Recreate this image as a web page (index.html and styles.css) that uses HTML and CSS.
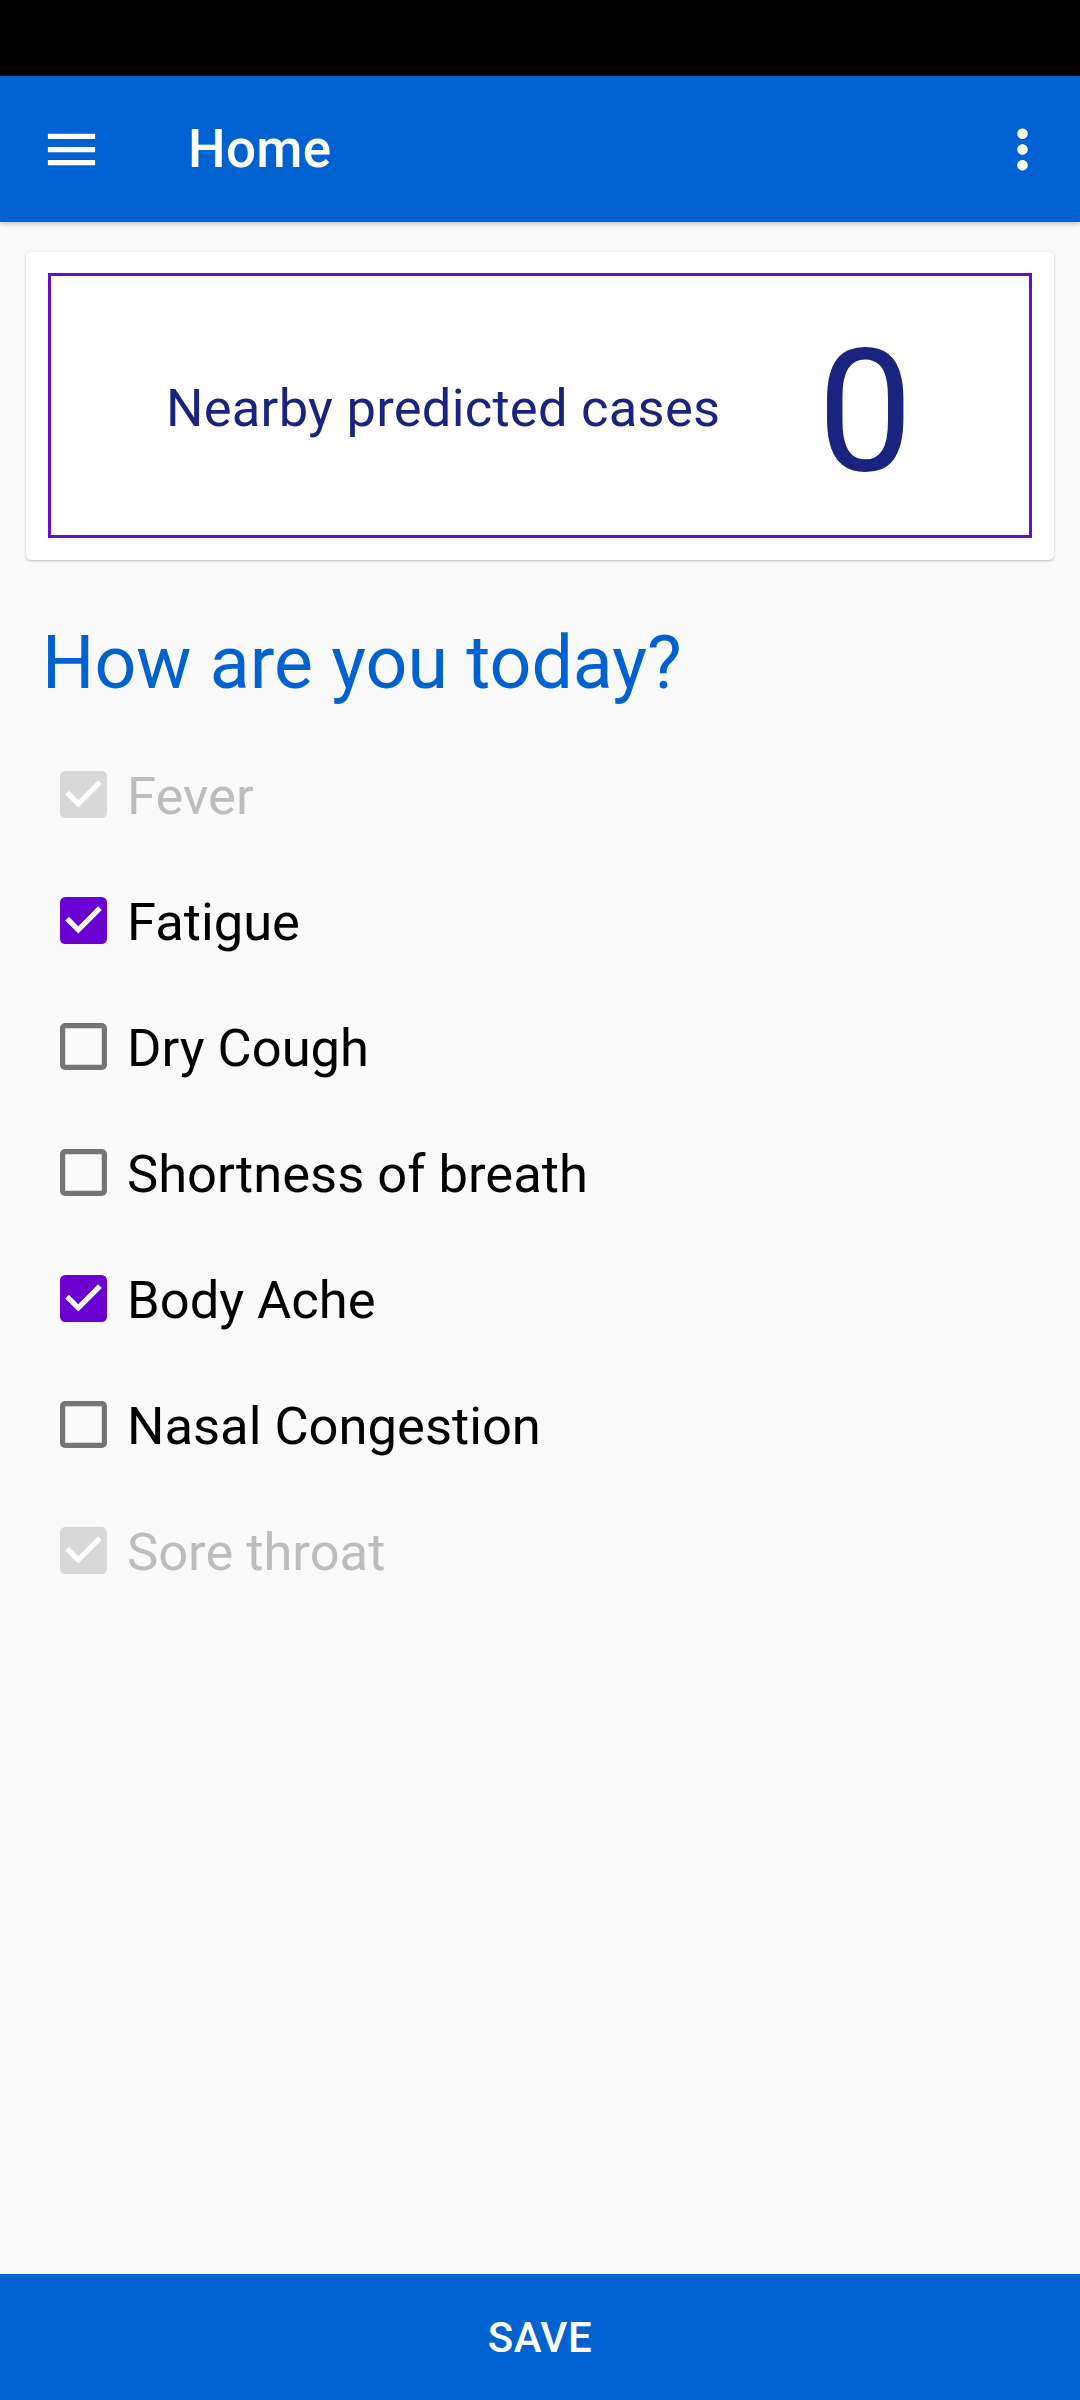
FILE: index.html
```html
<!DOCTYPE html>
<html lang="en">
<head>
<meta charset="utf-8">
<title>Home</title>
<link rel="stylesheet" href="styles.css">
</head>
<body>
<div class="screen">
  <div class="status-bar"></div>
  <header class="app-bar">
    <svg class="icon icon-menu" viewBox="0 0 24 24"><path fill="#fff" d="M3 18h18v-2H3v2zm0-5h18v-2H3v2zm0-7v2h18V6H3z"/></svg>
    <h1 class="app-title">Home</h1>
    <div class="spacer"></div>
    <svg class="icon icon-more" viewBox="0 0 24 24"><path fill="#fff" d="M12 8c1.1 0 2-.9 2-2s-.9-2-2-2-2 .9-2 2 .9 2 2 2zm0 2c-1.1 0-2 .9-2 2s.9 2 2 2 2-.9 2-2-.9-2-2-2zm0 6c-1.1 0-2 .9-2 2s.9 2 2 2 2-.9 2-2-.9-2-2-2z"/></svg>
  </header>
  <main class="content">
    <section class="card">
      <div class="cases-box">
        <span class="cases-label">Nearby predicted cases</span>
        <span class="cases-count">0</span>
      </div>
    </section>
    <h2 class="question">How are you today?</h2>
    <ul class="symptoms">
      <li class="symptom disabled">
        <svg class="cb" viewBox="3 3 18 18"><rect x="3" y="3" width="18" height="18" rx="2" class="cb-fill"/><path fill="#fff" d="M10 17l-5-5 1.41-1.41L10 14.170l7.59-7.59L19 8l-9 9z"/></svg>
        <span class="label">Fever</span>
      </li>
      <li class="symptom checked">
        <svg class="cb" viewBox="3 3 18 18"><rect x="3" y="3" width="18" height="18" rx="2" class="cb-fill"/><path fill="#fff" d="M10 17l-5-5 1.41-1.41L10 14.17l7.59-7.59L19 8l-9 9z"/></svg>
        <span class="label">Fatigue</span>
      </li>
      <li class="symptom">
        <svg class="cb" viewBox="3 3 18 18"><path class="cb-outline" d="M19 5v14H5V5h14m0-2H5c-1.1 0-2 .9-2 2v14c0 1.1.9 2 2 2h14c1.1 0 2-.9 2-2V5c0-1.1-.9-2-2-2z"/></svg>
        <span class="label">Dry Cough</span>
      </li>
      <li class="symptom">
        <svg class="cb" viewBox="3 3 18 18"><path class="cb-outline" d="M19 5v14H5V5h14m0-2H5c-1.1 0-2 .9-2 2v14c0 1.1.9 2 2 2h14c1.1 0 2-.9 2-2V5c0-1.1-.9-2-2-2z"/></svg>
        <span class="label">Shortness of breath</span>
      </li>
      <li class="symptom checked">
        <svg class="cb" viewBox="3 3 18 18"><rect x="3" y="3" width="18" height="18" rx="2" class="cb-fill"/><path fill="#fff" d="M10 17l-5-5 1.41-1.41L10 14.17l7.59-7.59L19 8l-9 9z"/></svg>
        <span class="label">Body Ache</span>
      </li>
      <li class="symptom">
        <svg class="cb" viewBox="3 3 18 18"><path class="cb-outline" d="M19 5v14H5V5h14m0-2H5c-1.1 0-2 .9-2 2v14c0 1.1.9 2 2 2h14c1.1 0 2-.9 2-2V5c0-1.1-.9-2-2-2z"/></svg>
        <span class="label">Nasal Congestion</span>
      </li>
      <li class="symptom disabled">
        <svg class="cb" viewBox="3 3 18 18"><rect x="3" y="3" width="18" height="18" rx="2" class="cb-fill"/><path fill="#fff" d="M10 17l-5-5 1.41-1.41L10 14.17l7.59-7.59L19 8l-9 9z"/></svg>
        <span class="label">Sore throat</span>
      </li>
    </ul>
  </main>
  <button class="save-bar">SAVE</button>
</div>
</body>
</html>
```

FILE: styles.css
```css
html, body {
  margin: 0;
  padding: 0;
}
body {
  width: 1080px;
  height: 2400px;
  background: #fafafa;
  font-family: Roboto, "Noto Sans", "Liberation Sans", sans-serif;
  overflow: hidden;
}
.screen {
  width: 1080px;
  height: 2400px;
  display: flex;
  flex-direction: column;
}
.status-bar {
  height: 76px;
  background: #000;
  flex: none;
}
.app-bar {
  height: 146px;
  flex: none;
  background: #0062d1;
  display: flex;
  align-items: center;
  padding: 0 26px 0 40px;
  box-shadow: 0 2px 5px rgba(0, 0, 0, 0.22);
  position: relative;
  z-index: 2;
}
.icon {
  width: 63px;
  height: 63px;
  flex: none;
  display: block;
}
.app-title {
  margin: 0 0 0 85px;
  color: #fff;
  font-size: 53px;
  font-weight: 500;
  line-height: 62px;
  letter-spacing: 0.3px;
}
.spacer {
  flex: 1;
}
.content {
  flex: 1;
  display: flex;
  flex-direction: column;
}
.card {
  margin: 30px 26px 0 26px;
  background: #fff;
  border-radius: 5px;
  box-shadow: 0 1px 3px rgba(0, 0, 0, 0.2), 0 1px 1px rgba(0, 0, 0, 0.06);
  padding: 21px 22px 22px 22px;
}
.cases-box {
  height: 265px;
  box-sizing: border-box;
  border: 3px solid #6a0dc8;
  display: flex;
  align-items: center;
  justify-content: space-between;
  padding: 0 116px 0 115px;
  color: #1a237e;
}
.cases-label {
  font-size: 52.5px;
  line-height: 62px;
  letter-spacing: 0.25px;
  margin-top: 5px;
}
.cases-count {
  font-size: 170px;
  line-height: 200px;
  margin-top: 12px;
}
.question {
  margin: 60px 0 0 0;
  padding-left: 42px;
  font-size: 73.5px;
  font-weight: 400;
  line-height: 86px;
  color: #0062d1;
}
.symptoms {
  list-style: none;
  margin: 25px 0 0 0;
  padding: 0 0 0 60px;
}
.symptom {
  height: 126px;
  display: flex;
  align-items: center;
  gap: 20px;
}
.cb {
  width: 47px;
  height: 47px;
  flex: none;
  display: block;
}
.cb-outline {
  fill: #757575;
}
.checked .cb-fill {
  fill: #6a00d2;
}
.disabled .cb-fill {
  fill: #d8d8d8;
}
.label {
  font-size: 52.5px;
  line-height: 62px;
  color: #000;
  margin-top: 3px;
}
.disabled .label {
  color: #bdbdbd;
}
.save-bar {
  flex: none;
  height: 126px;
  width: 100%;
  border: none;
  margin: 0;
  background: #0062d1;
  color: #fff;
  font-family: Roboto, "Noto Sans", "Liberation Sans", sans-serif;
  font-size: 42px;
  font-weight: 500;
  letter-spacing: 0.5px;
  padding: 0;
}
```
